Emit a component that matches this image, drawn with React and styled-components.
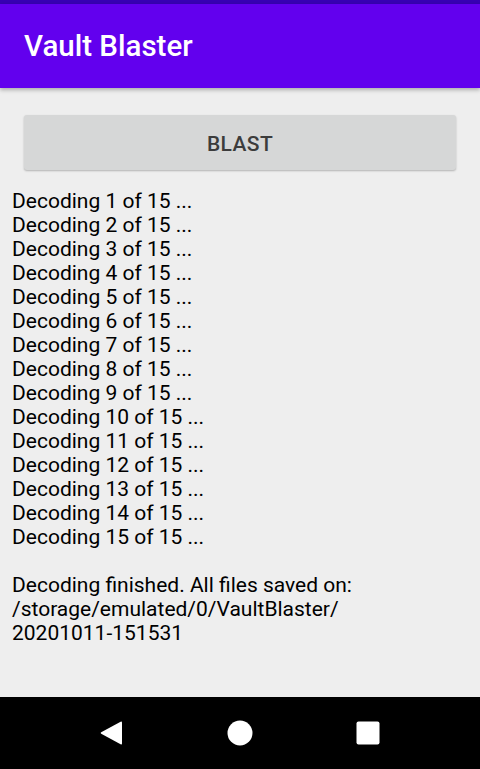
import styled, { createGlobalStyle } from 'styled-components';

const GlobalStyle = createGlobalStyle`
  html, body {
    margin: 0;
    padding: 0;
    background: #eeeeee;
  }

  body {
    font-family: Roboto, "Noto Sans", sans-serif;
  }
`;

const lines = Array.from({ length: 15 }, (_, i) => `Decoding ${i + 1} of 15 ...`);

const App = () => {
  return (
    <>
      <GlobalStyle />
      <Screen>
        <StatusBar />
        <AppBar>
          <Title>Vault Blaster</Title>
        </AppBar>
        <Content>
          <BlastButton>BLAST</BlastButton>
          <Log>
            {lines.map((line) => (
              <Line key={line}>{line}</Line>
            ))}
            <Line>&nbsp;</Line>
            <Line>Decoding finished. All files saved on:</Line>
            <Line>/storage/emulated/0/VaultBlaster/</Line>
            <Line>20201011-151531</Line>
          </Log>
        </Content>
        <NavBar>
          <NavIcon viewBox="0 0 24 24" width="24" height="24">
            <path d="M22 1.5 L22 22.5 Q22 24 20.6 23.3 L1.2 12.8 Q0 12 1.2 11.2 L20.6 0.7 Q22 0 22 1.5 Z" fill="#fff" />
          </NavIcon>
          <NavIcon viewBox="0 0 26 26" width="26" height="26">
            <circle cx="13" cy="13" r="12.5" fill="#fff" />
          </NavIcon>
          <NavIcon viewBox="0 0 24 24" width="24" height="24">
            <rect x="0.5" y="0.5" width="23" height="23" rx="2" fill="#fff" />
          </NavIcon>
        </NavBar>
      </Screen>
    </>
  );
};

const Screen = styled.div`
  width: 480px;
  height: 769px;
  display: flex;
  flex-direction: column;
  background: #eeeeee;
  overflow: hidden;
`;

const StatusBar = styled.div`
  height: 4px;
  background: #3700b3;
`;

const AppBar = styled.div`
  height: 84px;
  display: flex;
  align-items: center;
  padding-left: 24px;
  background: #6200ee;
  box-shadow: 0 2px 4px rgba(0, 0, 0, 0.28);
  position: relative;
  z-index: 1;
`;

const Title = styled.div`
  color: #ffffff;
  font-size: 29.5px;
  font-weight: 500;
  margin-top: -1px;
`;

const Content = styled.div`
  flex: 1;
  display: flex;
  flex-direction: column;
  padding: 27px 12px 0;
`;

const BlastButton = styled.div`
  height: 55px;
  margin: 0 12px;
  display: flex;
  align-items: center;
  justify-content: center;
  background: #d6d7d7;
  border-radius: 3px;
  box-shadow: 0 1px 2px rgba(0, 0, 0, 0.25);
  color: #3c3c3c;
  font-size: 21px;
  font-weight: 500;
  letter-spacing: 0.4px;
  padding-top: 2px;
  box-sizing: border-box;
`;

const Log = styled.div`
  margin-top: 19px;
  display: flex;
  flex-direction: column;
`;

const Line = styled.div`
  color: #000000;
  font-size: 21px;
  line-height: 24px;
  white-space: nowrap;
`;

const NavBar = styled.div`
  height: 72px;
  display: flex;
  align-items: center;
  justify-content: space-between;
  padding: 0 100px 0 100px;
  background: #000000;
`;

const NavIcon = styled.svg`
  display: block;
`;

export default App;
